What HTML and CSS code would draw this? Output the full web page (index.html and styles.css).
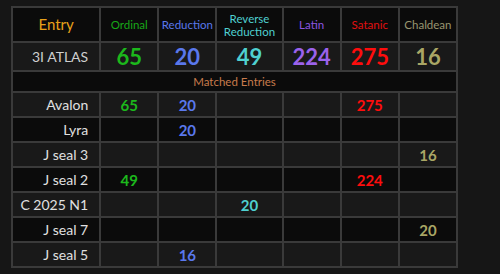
FILE: index.html
```html
<!DOCTYPE html>
<html lang="en">
<head>
  <meta charset="UTF-8">
  <title>3I ATLAS matches</title>
  <link rel="stylesheet" href="styles.css">
</head>
<body>
  <table class="matches">
    <colgroup>
      <col class="c-entry"><col class="c-num"><col class="c-num"><col class="c-rev">
      <col class="c-num"><col class="c-num"><col class="c-num">
    </colgroup>
    <tr class="head">
      <th class="entry">Entry</th>
      <th class="ord">Ordinal</th>
      <th class="red">Reduction</th>
      <th class="rev">Reverse<br>Reduction</th>
      <th class="lat">Latin</th>
      <th class="sat">Satanic</th>
      <th class="cha">Chaldean</th>
    </tr>
    <tr class="main">
      <td class="name">3I ATLAS</td>
      <td class="ord">65</td>
      <td class="red">20</td>
      <td class="rev">49</td>
      <td class="lat">224</td>
      <td class="sat">275</td>
      <td class="cha">16</td>
    </tr>
    <tr class="divider">
      <td colspan="7">Matched Entries</td>
    </tr>
    <tr class="row light">
      <td class="name">Avalon</td>
      <td class="ord">65</td><td class="red">20</td><td></td><td></td><td class="sat">275</td><td></td>
    </tr>
    <tr class="row dark">
      <td class="name">Lyra</td>
      <td></td><td class="red">20</td><td></td><td></td><td></td><td></td>
    </tr>
    <tr class="row light">
      <td class="name">J seal 3</td>
      <td></td><td></td><td></td><td></td><td></td><td class="cha">16</td>
    </tr>
    <tr class="row dark">
      <td class="name">J seal 2</td>
      <td class="ord">49</td><td></td><td></td><td></td><td class="sat">224</td><td></td>
    </tr>
    <tr class="row light">
      <td class="name">C 2025 N1</td>
      <td></td><td></td><td class="rev">20</td><td></td><td></td><td></td>
    </tr>
    <tr class="row dark">
      <td class="name">J seal 7</td>
      <td></td><td></td><td></td><td></td><td></td><td class="cha">20</td>
    </tr>
    <tr class="row light">
      <td class="name">J seal 5</td>
      <td></td><td class="red">16</td><td></td><td></td><td></td><td></td>
    </tr>
  </table>
</body>
</html>
```
FILE: styles.css
```css
body {
  margin: 0;
  padding: 6px 0 0 11px;
  background: #161616;
  font-family: Lato, "Open Sans", sans-serif;
  color: #dcdcdc;
}
.matches {
  border-collapse: collapse;
  border: 2px solid #3a3a3a;
  table-layout: fixed;
  width: 447px;
}
.c-entry { width: 88px; }
.c-num { width: 58px; }
.c-rev { width: 66px; }
.matches th, .matches td {
  border: 2px solid #3a3a3a;
  padding: 0;
  text-align: center;
  font-weight: normal;
}
.head {
  height: 35px;
  background: #0b0b0b;
  font-size: 11.5px;
  line-height: 13px;
}
.head .entry {
  font-size: 15px;
  color: #e9a11a;
}
.main {
  height: 29px;
  background: #191919;
  font-size: 22px;
}
.main td { font-weight: bold; }
.main .name {
  font-size: 14px;
  font-weight: normal;
  color: #cfcfcf;
}
.divider td {
  height: 19px;
  background: #0b0b0b;
  font-size: 11.5px;
  color: #c87b4c;
}
.row {
  height: 25px;
  font-size: 15px;
}
.row td { font-weight: bold; }
.row .name { font-weight: normal; font-size: 14px; }
.light { background: #191919; }
.dark { background: #0b0b0b; }
.name {
  text-align: right !important;
  padding-right: 11px !important;
  color: #e0e0e0;
}
.ord { color: #1cb81c; }
.red { color: #5a78ec; }
.rev { color: #4fd0d0; }
.lat { color: #9b62ec; }
.sat { color: #ff0d0d; }
.cha { color: #a9a665; }
.head .ord { color: #18a818; }
.head .lat { color: #8c55e0; }
.head .sat { color: #e01010; }
.head .cha { color: #999670; }
```
